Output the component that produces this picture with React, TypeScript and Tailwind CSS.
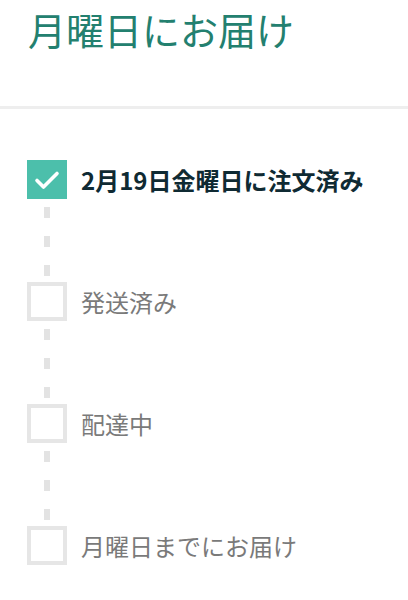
import React from 'react';

type Step = { label: string; done: boolean };

const steps: Step[] = [
  { label: '2月19日金曜日に注文済み', done: true },
  { label: '発送済み', done: false },
  { label: '配達中', done: false },
  { label: '月曜日までにお届け', done: false },
];

const font = "font-['Noto_Sans_CJK_JP','Noto_Sans',sans-serif]";

const Dashes = () => (
  <div className="flex flex-col gap-[18px] pl-[17px] pt-[8px] pb-[6px]">
    <div className="w-[6px] h-[11px] bg-[#e3e3e3]" />
    <div className="w-[6px] h-[11px] bg-[#e3e3e3]" />
    <div className="w-[6px] h-[11px] bg-[#e3e3e3]" />
  </div>
);

const StepRow = ({ step }: { step: Step }) => (
  <div className="flex items-center gap-[14px]">
    {step.done ? (
      <div className="w-[40px] h-[39px] bg-[#4cbfab] flex items-center justify-center">
        <svg width="26" height="26" viewBox="0 0 26 26" fill="none">
          <path
            d="M3 13.5l6.5 6.5L23 6.5"
            stroke="#fff"
            strokeWidth="3.6"
            strokeLinecap="round"
            strokeLinejoin="round"
          />
        </svg>
      </div>
    ) : (
      <div className="w-[40px] h-[39px] border-[4px] border-[#e6e6e6]" />
    )}
    <span
      className={
        step.done
          ? 'text-[24px] leading-[32px] font-bold text-[#0f2a33]'
          : 'text-[24px] leading-[32px] text-[#7a7a7a]'
      }
    >
      {step.label}
    </span>
  </div>
);

export default function App() {
  return (
    <div className={`w-[408px] h-[600px] bg-white overflow-hidden ${font}`}>
      <div className="pl-[28px] pt-[5px] h-[106px]">
        <h1 className="text-[38px] font-normal text-[#23806f] leading-[48px]">月曜日にお届け</h1>
      </div>
      <div className="h-[3px] bg-[#eeeeee]" />
      <div className="pl-[27px] pt-[51px]">
        {steps.map((s, i) => (
          <div key={s.label}>
            <StepRow step={s} />
            {i < steps.length - 1 && <Dashes />}
          </div>
        ))}
      </div>
    </div>
  );
}
